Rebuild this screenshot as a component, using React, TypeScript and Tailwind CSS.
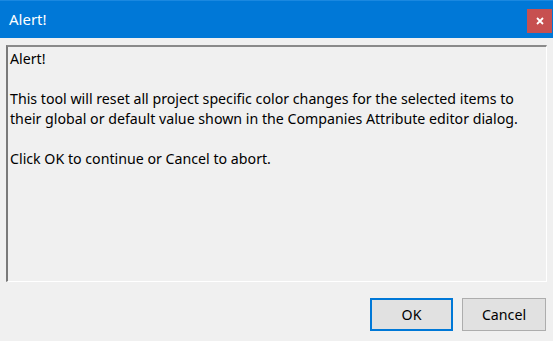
export default function App() {
  const font = { fontFamily: '"Noto Sans", "Open Sans", sans-serif' };
  return (
    <div className="w-[553px] h-[341px] bg-[#f0f0f0] flex flex-col overflow-hidden" style={font}>
      <div className="h-[38px] bg-[#0078d7] border-t border-[#1a88e0] flex items-start justify-between">
        <div className="pl-[9px] pt-[8px] text-white text-[15px] leading-[20px]">Alert!</div>
        <div className="mt-[8px] mr-[1px] w-[25px] h-[24px] bg-[#c75050] flex items-center justify-center">
          <svg width="8" height="8" viewBox="0 0 8 8">
            <path d="M1 1 L7 7 M7 1 L1 7" stroke="white" strokeWidth="1.8" />
          </svg>
        </div>
      </div>
      <div className="px-[6px] pt-[7px]">
        <div className="h-[237px] border-t-2 border-l-2 border-t-[#8a8a8a] border-l-[#7a7a7a] border-b border-r border-b-[#ffffff] border-r-[#ffffff] pl-[2px] pt-[2px] text-[14.2px] leading-[20px] text-black">
          <div>Alert!</div>
          <div>&nbsp;</div>
          <div>This tool will reset all project specific color changes for the selected items to</div>
          <div>their global or default value shown in the Companies Attribute editor dialog.</div>
          <div>&nbsp;</div>
          <div>Click OK to continue or Cancel to abort.</div>
        </div>
      </div>
      <div className="flex justify-end gap-[9px] pr-[7px] pt-[16px]">
        <div className="w-[83px] h-[33px] bg-[#e1e1e1] border-2 border-[#0078d7] flex items-center justify-center text-[14.2px] text-black">OK</div>
        <div className="w-[84px] h-[33px] bg-[#e1e1e1] border border-[#adadad] flex items-center justify-center text-[14.2px] text-black">Cancel</div>
      </div>
    </div>
  );
}
